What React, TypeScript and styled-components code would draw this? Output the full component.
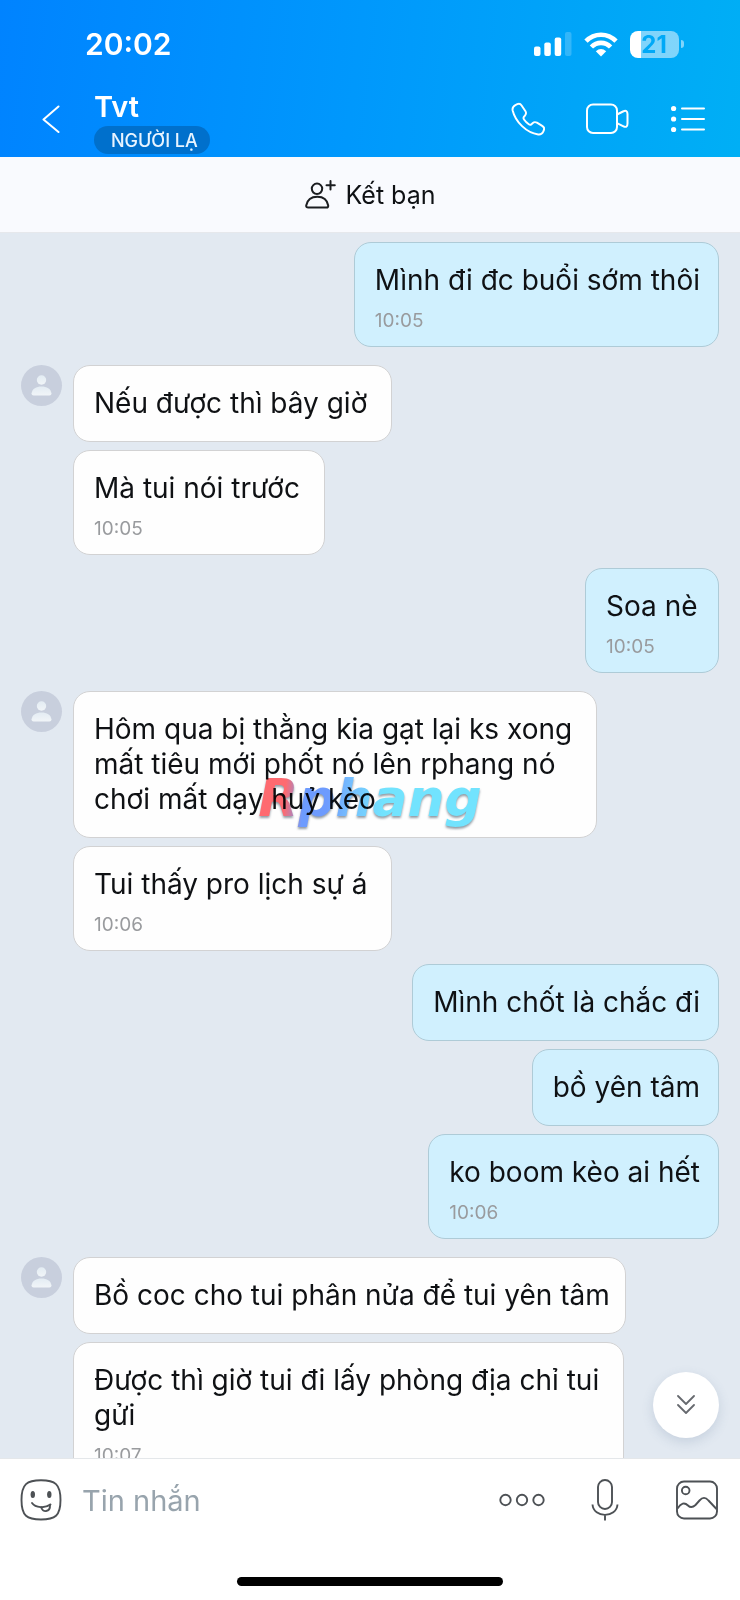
import React from "react";
import styled, { createGlobalStyle } from "styled-components";

const GlobalStyle = createGlobalStyle`
  *, *::before, *::after { box-sizing: border-box; }
  html, body, #root { height: 100%; }
  body {
    margin: 0;
    background: #fff;
    color: #0f1114;
    font-family: Inter, "Noto Sans", sans-serif;
  }
  button, input { font: inherit; color: inherit; }
  svg { display: block; flex: none; }
`;

const Screen = styled.div`
  display: flex;
  flex-direction: column;
  height: 100vh;
  overflow: hidden;
`;

const Header = styled.header`
  flex: none;
  color: #fff;
  background: linear-gradient(97deg, #0083ff 0%, #0098fc 48%, #00aff5 100%);
`;

const StatusBar = styled.div`
  display: flex;
  align-items: center;
  justify-content: space-between;
  height: 88px;
  padding: 0 56px 0 85px;
`;

const Clock = styled.time`
  font-size: 30px;
  font-weight: 600;
  line-height: 36px;
`;

const StatusIcons = styled.div`
  display: flex;
  align-items: center;
  gap: 12px;
`;

const Battery = styled.div`
  display: flex;
  align-items: center;
  gap: 2px;

  &::after {
    content: "";
    width: 3px;
    height: 8px;
    border-radius: 0 4px 4px 0;
    background: rgba(255, 255, 255, 0.5);
  }
`;

const BatteryLevel = styled.div`
  width: 49px;
  height: 27px;
  padding-right: 1px;
  border-radius: 8px;
  background: linear-gradient(90deg, #fff 0 22%, rgba(255, 255, 255, 0.5) 22%);
  color: #00a9f7;
  font-size: 24px;
  font-weight: 700;
  line-height: 27px;
  text-align: center;
`;

const NavBar = styled.nav`
  display: flex;
  align-items: flex-start;
  height: 69px;
  padding: 3px 21px 3px 26px;
`;

const IconButton = styled.button<{ $width: number }>`
  display: flex;
  flex: none;
  align-items: center;
  justify-content: center;
  width: ${(p) => p.$width}px;
  height: 56px;
  padding: 0;
  border: 0;
  background: none;
  cursor: pointer;
`;

const Contact = styled.div`
  display: flex;
  flex: 1;
  flex-direction: column;
  align-items: flex-start;
  gap: 3px;
  min-width: 0;
  padding-left: 18px;
`;

const ContactName = styled.h1`
  margin: 0;
  font-size: 29px;
  font-weight: 600;
  line-height: 32px;
`;

const StrangerTag = styled.span`
  padding: 1px 12px 0 17px;
  border-radius: 14px;
  background: #0070cc;
  color: #e8f4ff;
  font-size: 18px;
  font-weight: 500;
  line-height: 27px;
`;

const NavActions = styled.div`
  display: flex;
  gap: 20px;
`;

const AddFriendBar = styled.button`
  display: flex;
  flex: none;
  align-items: center;
  justify-content: center;
  gap: 10px;
  height: 76px;
  padding: 0;
  border: 0;
  border-bottom: 1px solid #e6e8ec;
  background: #f9fafe;
  font-size: 25px;
  line-height: 32px;
  cursor: pointer;
`;

const Conversation = styled.main`
  position: relative;
  flex: 1;
  min-height: 0;
  overflow: hidden;
  background: #e2e9f1;
`;

const Thread = styled.div`
  display: flex;
  flex-direction: column;
  padding: 9px 21px;
`;

const Group = styled.section<{ $own?: boolean }>`
  display: flex;
  align-items: flex-start;
  justify-content: ${(p) => (p.$own ? "flex-end" : "flex-start")};
  gap: 10px;
  margin-top: ${(p) => (p.$own ? 13 : 18)}px;

  &:first-child { margin-top: 0; }
`;

const Stack = styled.div<{ $own?: boolean }>`
  display: flex;
  flex-direction: column;
  align-items: ${(p) => (p.$own ? "flex-end" : "flex-start")};
  gap: 8px;
`;

const Bubble = styled.article<{ $own?: boolean; $timed?: boolean; $roomy?: boolean }>`
  min-width: 134px;
  padding: 20px ${(p) => (p.$roomy ? 24 : p.$own ? 18 : 15)}px ${(p) => (p.$timed ? 13 : 20)}px 20px;
  border: 1px solid ${(p) => (p.$own ? "#aecbd7" : "#d2d2d3")};
  border-radius: 17px;
  background: ${(p) => (p.$own ? "#d0f0fe" : "#fefefe")};
`;

const BubbleText = styled.p`
  margin: 0;
  font-size: 28px;
  line-height: 35px;
  white-space: pre-line;
`;

const SentAt = styled.time`
  display: block;
  margin-top: 11px;
  color: #999b9e;
  font-size: 19px;
  line-height: 24px;
`;

const ScrollDown = styled.button`
  position: absolute;
  right: 21px;
  bottom: 20px;
  display: flex;
  align-items: center;
  justify-content: center;
  width: 66px;
  height: 66px;
  padding: 0;
  border: 0;
  border-radius: 50%;
  background: #fff;
  box-shadow: 0 4px 12px rgba(70, 100, 140, 0.18);
  cursor: pointer;
`;

const Watermark = styled.div`
  position: absolute;
  top: 535px;
  left: 50%;
  transform: translateX(-50%);
  padding: 0 4px;
  background: linear-gradient(95deg, #ff3b43 0 14%, #3f7dff 22% 32%, #4aaeff 42%, #45dcff 56%);
  background-clip: text;
  -webkit-background-clip: text;
  color: transparent;
  font-family: "DejaVu Sans", sans-serif;
  font-size: 52px;
  font-style: italic;
  font-weight: 700;
  line-height: 60px;
  opacity: 0.76;
  mix-blend-mode: multiply;
  filter: drop-shadow(0 2px 1px rgba(20, 40, 60, 0.6));
  pointer-events: none;
`;

const Footer = styled.footer`
  display: flex;
  flex: none;
  flex-direction: column;
  height: 142px;
  border-top: 1px solid #e4e7ea;
  background: #fff;
`;

const Composer = styled.form`
  display: flex;
  align-items: center;
  height: 82px;
  padding: 0 11px 0 19px;
`;

const MessageInput = styled.input`
  flex: 1;
  min-width: 0;
  height: 56px;
  padding: 0 0 0 19px;
  border: 0;
  outline: 0;
  background: none;
  font-size: 29px;

  &::placeholder { color: #98a4ad; opacity: 1; }
`;

const ComposerActions = styled.div`
  display: flex;
  gap: 46px;
`;

const HomeIndicator = styled.div`
  align-self: center;
  width: 36%;
  height: 9px;
  margin-top: 36px;
  border-radius: 5px;
  background: #000;
`;

const SignalIcon = () => (
  <svg width="38" height="24" viewBox="0 0 38 24" fill="#fff" aria-hidden="true">
    <rect x="0" y="14.500" width="6.500" height="9.500" rx="2" />
    <rect x="10.300" y="10.500" width="6.500" height="13.500" rx="2" />
    <rect x="20.700" y="5.500" width="6.500" height="18.500" rx="2" />
    <rect x="31" y="0" width="6.500" height="24" rx="2" opacity=".2" />
  </svg>
);

const WifiIcon = () => (
  <svg width="34" height="25" viewBox="0 0 34 25" aria-hidden="true">
    <g fill="none" stroke="#fff" strokeWidth="4.600">
      <path d="M2 9.200C10.300 .6 23.700 .6 32 9.200" />
      <path d="M7.400 15C12.700 9.500 21.300 9.500 26.600 15" />
    </g>
    <path d="M17 24.500 11.800 19.300Q17 14.700 22.200 19.300Z" fill="#fff" />
  </svg>
);

const BackIcon = () => (
  <svg width="18" height="28" viewBox="0 0 18 28" fill="none" stroke="#fff" strokeWidth="2" strokeLinecap="round" strokeLinejoin="round" aria-hidden="true">
    <path d="M16.500 1.500 1.500 14.500l15 12.500" />
  </svg>
);

const PhoneIcon = () => (
  <svg width="34" height="34" viewBox="0 0 35 35" fill="none" stroke="#fff" strokeWidth="2" strokeLinejoin="round" aria-hidden="true">
    <path d="M4.500 3.200 6.500 2.300C8.200 1.500 9.800 2 10.900 3.600l4 6c.9 1.500.6 3-.5 4.300l-1 1.200c-.7.900-.7 1.900 0 2.900 1.300 1.900 3 3.600 4.900 4.900 1 .7 2 .6 2.800-.1l1.100-1c1.300-1.200 2.900-1.400 4.500-.5l5.400 3.200c1.900 1.100 2.400 2.700 1.700 4.500l-.6 1.500c-.9 2-2.700 3.200-5.200 2.900C15.900 31.700 4.600 20.500 1.700 8.700 1.200 6.200 2.400 4.300 4.500 3.200Z" />
  </svg>
);

const VideoIcon = () => (
  <svg width="44" height="32" viewBox="0 0 44 32" fill="none" stroke="#fff" strokeWidth="2" strokeLinejoin="round" aria-hidden="true">
    <rect x="2" y="1.500" width="30" height="28.500" rx="6" />
    <path d="M32 11.500 38 8.500C41 7.100 42.500 8 42.500 11V20.500C42.500 24 41 24.600 38 23.100L32 20.200" />
  </svg>
);

const ListIcon = () => (
  <svg width="34" height="28" viewBox="0 0 34 28" fill="#fff" stroke="#fff" aria-hidden="true">
    <g stroke="none">
      <circle cx="2.600" cy="3.500" r="2.600" />
      <circle cx="2.600" cy="14" r="2.600" />
      <circle cx="2.600" cy="24.500" r="2.600" />
    </g>
    <path d="M11 3.500H33M11 14H33M11 24.500H33" strokeWidth="2" strokeLinecap="round" />
  </svg>
);

const AddFriendIcon = () => (
  <svg width="31" height="29" viewBox="0 0 31 29" fill="none" stroke="#1b1d20" strokeWidth="2" strokeLinecap="round" strokeLinejoin="round" aria-hidden="true">
    <circle cx="12" cy="8.800" r="5.200" />
    <path d="M3.300 27.500H21.500Q23.500 27.500 23.200 25.500C22.200 19.500 18.200 16.700 12.300 16.700S2.300 19.500 1.200 25.500Q1 27.500 3.300 27.500Z" />
    <path d="M25.500 1V9.500M21.500 5.200H29.800" />
  </svg>
);

const AvatarIcon = () => (
  <svg width="42" height="42" viewBox="0 0 42 42" role="img" aria-label="Tvt">
    <defs>
      <linearGradient id="person" x1="0" y1="0" x2="0" y2="1">
        <stop offset="0" stopColor="#e3ecf3" />
        <stop offset="1" stopColor="#f1f5f8" />
      </linearGradient>
    </defs>
    <circle cx="20.500" cy="20.500" r="20.500" fill="#c8cfdd" />
    <circle cx="20.500" cy="15" r="4.700" fill="url(#person)" />
    <path d="M10.500 28.500C11.500 23.500 15 21.500 20.500 21.500s9 2 10 7Q30.500 30.500 28.500 30.500H12.500Q10.500 30.500 10.500 28.500Z" fill="url(#person)" />
  </svg>
);

const DoubleDownIcon = () => (
  <svg width="18" height="20" viewBox="0 0 18 20" fill="none" stroke="#66696e" strokeWidth="1.800" strokeLinecap="round" strokeLinejoin="round" aria-hidden="true">
    <path d="M1 1 9 9 17 1M1 10 9 18 17 10" />
  </svg>
);

const StickerIcon = () => (
  <svg width="42" height="42" viewBox="0 0 42 42" fill="none" stroke="#4d5155" strokeWidth="1.900" strokeLinecap="round" aria-hidden="true">
    <path d="M21 1.200C35 1.200 40.500 5 40.500 21S35 40.500 21 40.500 1.500 37 1.500 21 7 1.200 21 1.200Z" />
    <ellipse cx="12.800" cy="15.500" rx="2.200" ry="3.600" fill="#4d5155" stroke="none" />
    <ellipse cx="29.300" cy="15.500" rx="2.200" ry="3.600" fill="#4d5155" stroke="none" />
    <path d="M12 24C15.500 29 25 29.500 30.500 25.500" />
    <path d="M21.200 28.200C22 33.500 30.500 34 30 25.800" />
  </svg>
);

const MoreIcon = () => (
  <svg width="46" height="14" viewBox="0 0 46 14" fill="none" stroke="#4d5155" strokeWidth="1.900" aria-hidden="true">
    <circle cx="6.500" cy="7" r="5.200" />
    <circle cx="23" cy="7" r="5.200" />
    <circle cx="39.500" cy="7" r="5.200" />
  </svg>
);

const MicIcon = () => (
  <svg width="28" height="42" viewBox="0 0 28 42" fill="none" stroke="#4d5155" strokeWidth="1.900" aria-hidden="true">
    <rect x="7" y="1" width="14" height="29" rx="7" />
    <path d="M1.500 25.500C2.500 39.300 25.500 39.300 26.500 25.500M14 36V41.500" />
  </svg>
);

const PictureIcon = () => (
  <svg width="42" height="40" viewBox="0 0 42 40" fill="none" stroke="#4d5155" strokeWidth="1.900" aria-hidden="true">
    <rect x="1" y="1.500" width="40" height="37" rx="7" />
    <circle cx="9.700" cy="10.500" r="3.800" />
    <path d="M1.500 28.500C5 23 8.500 22 12 25.500c2.500 2.400 5 1.800 7.500-.5l4-4.500c3-3.500 6-3.500 9 0l8 8.500" />
  </svg>
);

type Message = { text: string; time?: string; roomy?: boolean };
type MessageGroup = { own?: boolean; messages: Message[] };

const thread: MessageGroup[] = [
  { own: true, messages: [{ text: "Mình đi đc buổi sớm thôi", time: "10:05" }] },
  {
    messages: [
      { text: "Nếu được thì bây giờ", roomy: true },
      { text: "Mà tui nói trước", time: "10:05", roomy: true },
    ],
  },
  { own: true, messages: [{ text: "Soa nè", time: "10:05" }] },
  {
    messages: [
      {
        text: "Hôm qua bị thằng kia gạt lại ks xong\nmất tiêu mới phốt nó lên rphang nó\nchơi mất dạy huỷ kèo",
        roomy: true,
      },
      { text: "Tui thấy pro lịch sự á", time: "10:06", roomy: true },
    ],
  },
  {
    own: true,
    messages: [
      { text: "Mình chốt là chắc đi" },
      { text: "bồ yên tâm" },
      { text: "ko boom kèo ai hết", time: "10:06" },
    ],
  },
  {
    messages: [
      { text: "Bồ coc cho tui phân nửa để tui yên tâm" },
      { text: "Được thì giờ tui đi lấy phòng địa chỉ tui\ngửi", time: "10:07", roomy: true },
    ],
  },
];

export default function App() {
  return (
    <>
      <GlobalStyle />
      <Screen>
        <Header>
          <StatusBar>
            <Clock>20:02</Clock>
            <StatusIcons>
              <SignalIcon />
              <WifiIcon />
              <Battery>
                <BatteryLevel>21</BatteryLevel>
              </Battery>
            </StatusIcons>
          </StatusBar>
          <NavBar>
            <IconButton type="button" $width={50} aria-label="Quay lại">
              <BackIcon />
            </IconButton>
            <Contact>
              <ContactName>Tvt</ContactName>
              <StrangerTag>NGƯỜI LẠ</StrangerTag>
            </Contact>
            <NavActions>
              <IconButton type="button" $width={58} aria-label="Gọi thoại">
                <PhoneIcon />
              </IconButton>
              <IconButton type="button" $width={60} aria-label="Gọi video">
                <VideoIcon />
              </IconButton>
              <IconButton type="button" $width={62} aria-label="Tùy chọn">
                <ListIcon />
              </IconButton>
            </NavActions>
          </NavBar>
        </Header>

        <AddFriendBar type="button">
          <AddFriendIcon />
          Kết bạn
        </AddFriendBar>

        <Conversation>
          <Thread>
            {thread.map((group, g) => (
              <Group key={g} $own={group.own}>
                {!group.own && <AvatarIcon />}
                <Stack $own={group.own}>
                  {group.messages.map((m, i) => (
                    <Bubble key={i} $own={group.own} $timed={!!m.time} $roomy={m.roomy}>
                      <BubbleText>{m.text}</BubbleText>
                      {m.time && <SentAt>{m.time}</SentAt>}
                    </Bubble>
                  ))}
                </Stack>
              </Group>
            ))}
          </Thread>
          <Watermark>Rphang</Watermark>
          <ScrollDown type="button" aria-label="Xuống cuối">
            <DoubleDownIcon />
          </ScrollDown>
        </Conversation>

        <Footer>
          <Composer>
            <IconButton type="button" $width={44} aria-label="Nhãn dán">
              <StickerIcon />
            </IconButton>
            <MessageInput type="text" placeholder="Tin nhắn" aria-label="Tin nhắn" />
            <ComposerActions>
              <IconButton type="button" $width={46} aria-label="Thêm">
                <MoreIcon />
              </IconButton>
              <IconButton type="button" $width={28} aria-label="Ghi âm">
                <MicIcon />
              </IconButton>
              <IconButton type="button" $width={64} aria-label="Hình ảnh">
                <PictureIcon />
              </IconButton>
            </ComposerActions>
          </Composer>
          <HomeIndicator />
        </Footer>
      </Screen>
    </>
  );
}
